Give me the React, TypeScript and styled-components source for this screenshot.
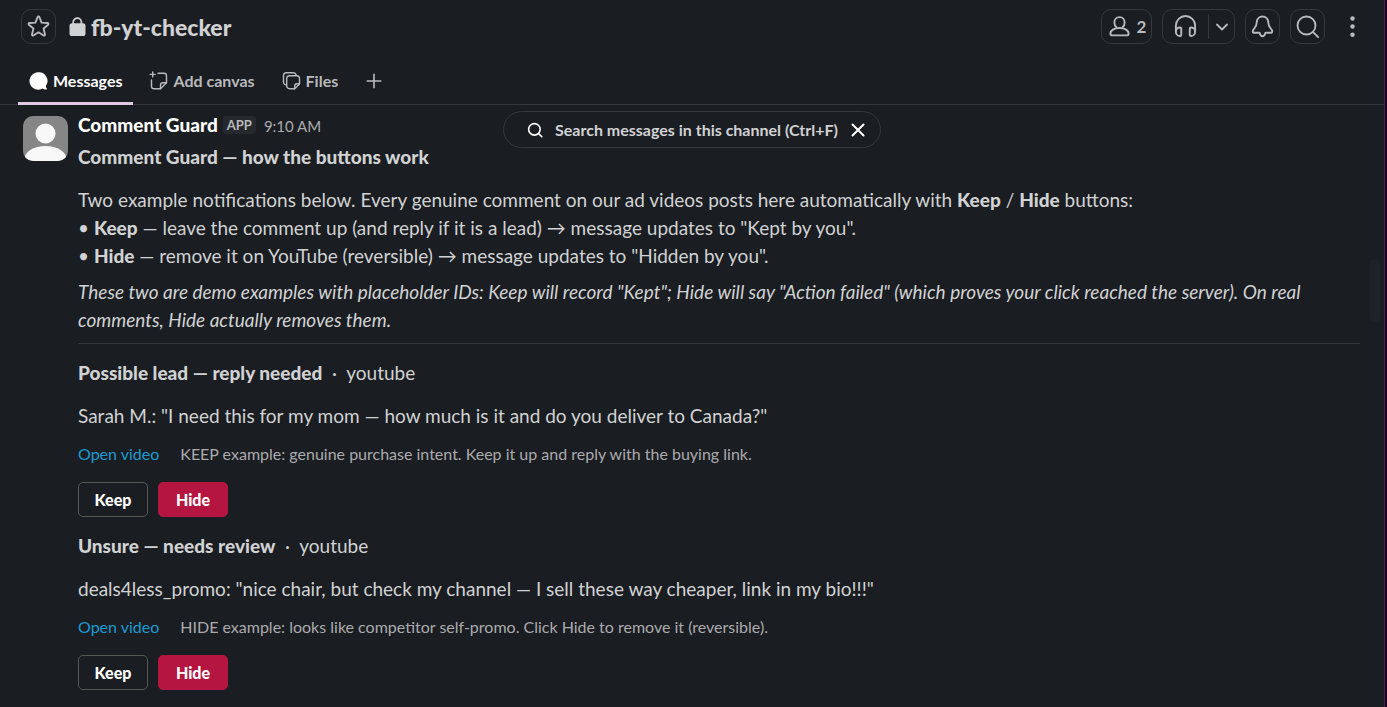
import React from 'react';
import styled, { createGlobalStyle, css } from 'styled-components';

const GlobalStyle = createGlobalStyle`
  *, *::before, *::after { box-sizing: border-box; }
  html, body, #root { height: 100%; }
  body {
    margin: 0;
    background: #1a1d21;
    color: #d1d2d3;
    font-family: Lato, "Liberation Sans", sans-serif;
    overflow: hidden;
  }
  button { font-family: inherit; cursor: pointer; }
  p, h1, h2, ul { margin: 0; padding: 0; }
`;

const Window = styled.div`
  display: flex;
  flex-direction: column;
  height: 100%;
  border-right: 2px solid #1f0022;
`;

const Pane = styled.main`
  display: flex;
  flex-direction: column;
  flex: 1;
  min-height: 0;
  border-right: 1px solid #4a2250;
`;

const Header = styled.header`
  display: flex;
  align-items: center;
  justify-content: space-between;
  height: 53px;
  padding: 0 14px 0 21px;
`;

const Group = styled.div<{ $gap: number }>`
  display: flex;
  align-items: center;
  gap: ${(p) => p.$gap}px;
`;

const outline = css`
  height: 35px;
  border: 1px solid #35383c;
  border-radius: 10px;
`;

const OutlineButton = styled.button<{ $wide?: boolean }>`
  ${outline}
  display: flex;
  align-items: center;
  justify-content: center;
  gap: 5px;
  width: ${(p) => (p.$wide ? 51 : 35)}px;
  padding: 0;
  background: transparent;
  color: #b9babd;
  font-size: 17px;
  font-weight: 700;
`;

const SplitButton = styled.div`
  ${outline}
  display: flex;
  align-items: center;
  width: 73px;
`;

const PlainButton = styled.button<{ $width: number }>`
  display: flex;
  align-items: center;
  justify-content: center;
  width: ${(p) => p.$width}px;
  height: 25px;
  padding: 0;
  border: 0;
  background: transparent;
  color: #b9babd;
`;

const SplitRule = styled.span`
  width: 1px;
  height: 25px;
  background: #35383c;
`;

const Title = styled.h1`
  display: flex;
  align-items: center;
  gap: 5px;
  font-size: 23px;
  line-height: 28px;
  font-weight: 900;
`;

const Tabs = styled.nav`
  display: flex;
  gap: 5px;
  height: 52px;
  padding-left: 18px;
  border-bottom: 1px solid #35383c;
`;

const Tab = styled.button<{ $active?: boolean }>`
  display: flex;
  align-items: center;
  gap: 4px;
  height: 52px;
  padding: 7px 11px 0;
  border: 0;
  border-bottom: 3px solid ${(p) => (p.$active ? '#e3c8e8' : 'transparent')};
  background: transparent;
  color: ${(p) => (p.$active ? '#ffffff' : '#b9babd')};
  font-size: 16px;
  line-height: 24px;
  font-weight: 700;
`;

const Feed = styled.section`
  position: relative;
  flex: 1;
  min-height: 0;
  padding: 7px 24px 0 23px;
`;

const SearchPill = styled.div`
  position: absolute;
  top: 6px;
  left: 50%;
  transform: translateX(-50%);
  display: flex;
  align-items: center;
  height: 37px;
  padding: 0 9px 0 23px;
  border: 1px solid #35383c;
  border-radius: 19px;
  background: #1a1d21;
`;

const SearchButton = styled.button`
  display: flex;
  align-items: center;
  gap: 12px;
  padding: 0;
  border: 0;
  background: transparent;
  color: #d1d2d3;
  font-size: 16px;
  line-height: 24px;
  font-weight: 700;
  white-space: nowrap;
  svg { color: #ffffff; }
`;

const CloseButton = styled(PlainButton)`
  margin-left: 8px;
  color: #ffffff;
`;

const ScrollThumb = styled.div`
  position: absolute;
  top: 154px;
  right: 4px;
  width: 10px;
  height: 63px;
  border-radius: 5px;
  background: #1f2226;
`;

const Message = styled.article`
  display: flex;
  align-items: flex-start;
  gap: 10px;
`;

const Avatar = styled.svg`
  flex: none;
  width: 45px;
  height: 45px;
  margin-top: 4px;
  border-radius: 10px;
`;

const Body = styled.div`
  flex: 1;
  min-width: 0;
  font-size: 19px;
  line-height: 28px;
`;

const Byline = styled.div`
  display: flex;
  align-items: center;
  height: 26px;
  margin-bottom: 5px;
`;

const Author = styled.strong`
  color: #ffffff;
  font-weight: 900;
`;

const AppBadge = styled.span`
  margin-left: 5px;
  padding: 0 4px;
  border-radius: 3px;
  background: #25282c;
  color: #b9babd;
  font-size: 13px;
  line-height: 18px;
  font-weight: 700;
`;

const Time = styled.time`
  margin-left: 8px;
  padding-top: 2px;
  color: #ababad;
  font-size: 15px;
`;

const Heading = styled.h2`
  font-size: 19px;
  line-height: 28px;
  font-weight: 900;
`;

const Intro = styled.div`
  margin-top: 15px;
  b { font-weight: 900; }
`;

const Bullets = styled.ul`
  list-style: none;
  li::before { content: "• "; }
`;

const Note = styled.p`
  margin-top: 8px;
  font-style: italic;
`;

const Divider = styled.hr`
  height: 1px;
  margin: 9px 0 15px;
  border: 0;
  background: #35383c;
`;

const Card = styled.section`
  & + & { margin-top: 15px; }
`;

const CardTitle = styled.p`
  white-space: pre-wrap;
  b { font-weight: 900; }
`;

const Quote = styled.p`
  margin-top: 15px;
`;

const Context = styled.div`
  display: flex;
  gap: 21px;
  margin-top: 12px;
  color: #ababad;
  font-size: 16px;
  line-height: 24px;
`;

const Link = styled.a`
  color: #1d9bd1;
  text-decoration: none;
`;

const Actions = styled.div`
  display: flex;
  gap: 10px;
  margin-top: 16px;
`;

const ActionButton = styled.button<{ $danger?: boolean }>`
  width: 70px;
  height: 35px;
  padding: 0;
  border: 1px solid ${(p) => (p.$danger ? '#b41541' : '#565856')};
  border-radius: 5px;
  background: ${(p) => (p.$danger ? '#b41541' : 'transparent')};
  color: #ffffff;
  font-size: 16px;
  font-weight: 900;
`;

type IconProps = { size?: number; weight?: number; children: React.ReactNode };

const Icon = ({ size = 25, weight = 1.5, children }: IconProps) => (
  <svg
    width={size}
    height={size}
    viewBox="0 0 20 20"
    fill="none"
    stroke="currentColor"
    strokeWidth={weight}
    strokeLinecap="round"
    strokeLinejoin="round"
    aria-hidden="true"
  >
    {children}
  </svg>
);

const StarIcon = () => (
  <Icon>
    <path d="M9.3 2.4c.25-.6 1.15-.6 1.4 0l1.75 4.45 4.8.35c.7.05.95.9.45 1.35l-3.65 3.1 1.15 4.7c.15.65-.55 1.15-1.1.8L10 14.6l-4.1 2.55c-.55.35-1.25-.15-1.1-.8l1.15-4.7L2.3 8.55c-.5-.45-.25-1.3.45-1.35l4.8-.35z" />
  </Icon>
);

const LockIcon = () => (
  <svg width="17" height="20" viewBox="0 0 17 20" aria-hidden="true">
    <path d="M4.2 8V5.2a4.1 4.1 0 0 1 8.200 0V8" fill="none" stroke="currentColor" strokeWidth="1.7" />
    <rect x="0.5" y="6.300" width="16" height="12.700" rx="2.600" fill="currentColor" />
  </svg>
);

const PersonIcon = () => (
  <Icon>
    <path d="M7.600 10.600c-1.100-.9-1.700-2.200-1.700-3.900C5.900 4.300 7.600 2.500 10 2.500s4.100 1.800 4.100 4.200c0 1.700-.6 3-1.700 3.900" />
    <path d="M10 11.200c-4.300 0-7.300 2-7.300 4.300 0 1 .6 1.600 1.700 1.600h11.200c1.100 0 1.700-.6 1.700-1.600 0-2.300-3-4.300-7.300-4.300z" />
  </Icon>
);

const HeadphonesIcon = () => (
  <Icon>
    <path d="M2.300 14V9.300a7.700 7.700 0 0 1 15.400 0V14" />
    <path d="M6.600 11.800c0-.6-.4-1-1-1-1.900 0-3.300 1.400-3.300 3.300s1.400 3.500 3.300 3.500c.6 0 1-.4 1-1zM13.400 11.800c0-.6.4-1 1-1 1.900 0 3.300 1.400 3.300 3.300s-1.400 3.500-3.300 3.500c-.6 0-1-.4-1-1z" />
  </Icon>
);

const BellIcon = () => (
  <Icon>
    <path d="M10 2c-2.700 0-4.500 1.900-4.600 4.600-.1 2.200-.5 3.500-1.900 4.900-.9.900-1.300 1.500-1.300 2.200 0 .8.500 1.300 1.400 1.300h3.700c.3 0 .5.300.6.600.3 1.400 1 2.200 2.100 2.200s1.800-.8 2.100-2.200c.1-.3.300-.6.600-.6h3.700c.9 0 1.400-.5 1.400-1.300 0-.7-.4-1.300-1.300-2.200-1.400-1.400-1.800-2.700-1.900-4.900C14.500 3.900 12.700 2 10 2z" />
  </Icon>
);

const SearchIcon = ({ size, weight }: { size?: number; weight?: number }) => (
  <Icon size={size} weight={weight}>
    <circle cx="9.2" cy="9.2" r="7.2" />
    <path d="m14.500 14.500 4 4" />
  </Icon>
);

const ChatIcon = () => (
  <svg width="20" height="20" viewBox="0 0 20 20" fill="currentColor" aria-hidden="true">
    <path d="M9.300 1.300a8.700 8.700 0 1 0 4.300 16.200c1 .8 2.600 1.200 3.900 1 .5-.1.600-.6.300-.9-.7-.7-.9-1.700-.9-2.600A8.700 8.700 0 0 0 9.300 1.300z" />
  </svg>
);

const CanvasIcon = () => (
  <Icon size={20} weight={1.4}>
    <path d="M3.700.9v5M1.200 3.400h5" />
    <path d="M9 2.200h6a2.500 2.500 0 0 1 2.500 2.500v7L11.500 17.700H5a2.500 2.500 0 0 1-2.500-2.500V9" />
    <path d="M17.500 11.700H14a2.500 2.500 0 0 0-2.500 2.500v3.500" />
  </Icon>
);

const FilesIcon = () => (
  <Icon size={20} weight={1.4}>
    <path d="M3.500 13.900A2.800 2.800 0 0 1 1.500 11.200V4.500A2.800 2.800 0 0 1 4.300 1.700h7.200a2.800 2.800 0 0 1 2.600 2" />
    <path d="M7.500 4.700h7.200a2.800 2.800 0 0 1 2.800 2.800v5.500L12.700 17.700H7.500a2.800 2.800 0 0 1-2.800-2.800V7.500a2.800 2.800 0 0 1 2.800-2.800z" />
    <path d="M17.500 12.700H15a2.300 2.300 0 0 0-2.300 2.300v2.700" />
  </Icon>
);

type Example = { kind: string; quote: string; hint: string };

const examples: Example[] = [
  {
    kind: 'Possible lead — reply needed',
    quote: 'Sarah M.: "I need this for my mom — how much is it and do you deliver to Canada?"',
    hint: 'KEEP example: genuine purchase intent. Keep it up and reply with the buying link.',
  },
  {
    kind: 'Unsure — needs review',
    quote: 'deals4less_promo: "nice chair, but check my channel — I sell these way cheaper, link in my bio!!!"',
    hint: 'HIDE example: looks like competitor self-promo. Click Hide to remove it (reversible).',
  },
];

const ExampleCard = ({ kind, quote, hint }: Example) => (
  <Card>
    <CardTitle><b>{kind}</b>{'  ·  youtube'}</CardTitle>
    <Quote>{quote}</Quote>
    <Context>
      <Link href="#video">Open video</Link>
      <span>{hint}</span>
    </Context>
    <Actions>
      <ActionButton>Keep</ActionButton>
      <ActionButton $danger>Hide</ActionButton>
    </Actions>
  </Card>
);

export default function App() {
  return (
    <>
      <GlobalStyle />
      <Window>
        <Pane>
          <Header>
            <Group $gap={13}>
              <OutlineButton aria-label="Star channel"><StarIcon /></OutlineButton>
              <Title><LockIcon />fb-yt-checker</Title>
            </Group>
            <Group $gap={10}>
              <OutlineButton $wide aria-label="2 members"><PersonIcon />2</OutlineButton>
              <SplitButton>
                <PlainButton $width={45} aria-label="Start huddle"><HeadphonesIcon /></PlainButton>
                <SplitRule />
                <PlainButton $width={25} aria-label="Huddle options">
                  <Icon size={20} weight={1.800}><path d="m5 7.500 5 5 5-5" /></Icon>
                </PlainButton>
              </SplitButton>
              <OutlineButton aria-label="Notifications"><BellIcon /></OutlineButton>
              <OutlineButton aria-label="Search"><SearchIcon /></OutlineButton>
              <PlainButton $width={35} aria-label="More actions">
                <Icon>
                  <g fill="currentColor" stroke="none">
                    <circle cx="10" cy="3.500" r="1.800" />
                    <circle cx="10" cy="10" r="1.800" />
                    <circle cx="10" cy="16.500" r="1.800" />
                  </g>
                </Icon>
              </PlainButton>
            </Group>
          </Header>
          <Tabs aria-label="Channel">
            <Tab $active><ChatIcon />Messages</Tab>
            <Tab><CanvasIcon />Add canvas</Tab>
            <Tab><FilesIcon />Files</Tab>
            <Tab aria-label="Add tab">
              <Icon size={18} weight={1.800}><path d="M10 2.500v15M2.500 10h15" /></Icon>
            </Tab>
          </Tabs>
          <Feed>
            <Message>
              <Avatar viewBox="0 0 45 45" role="img" aria-label="Comment Guard">
                <rect width="45" height="45" fill="#868686" />
                <circle cx="22.500" cy="17.500" r="10" fill="#f8f8f8" />
                <ellipse cx="22.500" cy="44" rx="21.500" ry="14" fill="#f8f8f8" />
              </Avatar>
              <Body>
                <Byline>
                  <Author>Comment Guard</Author>
                  <AppBadge>APP</AppBadge>
                  <Time>9:10 AM</Time>
                </Byline>
                <Heading>Comment Guard — how the buttons work</Heading>
                <Intro>
                  <p>
                    Two example notifications below. Every genuine comment on our ad videos posts here
                    automatically with <b>Keep</b> / <b>Hide</b> buttons:
                  </p>
                  <Bullets>
                    <li><b>Keep</b> — leave the comment up (and reply if it is a lead) → message updates to "Kept by you".</li>
                    <li><b>Hide</b> — remove it on YouTube (reversible) → message updates to "Hidden by you".</li>
                  </Bullets>
                </Intro>
                <Note>
                  These two are demo examples with placeholder IDs: Keep will record "Kept"; Hide will say
                  "Action failed" (which proves your click reached the server). On real comments, Hide
                  actually removes them.
                </Note>
                <Divider />
                {examples.map((e) => <ExampleCard key={e.kind} {...e} />)}
              </Body>
            </Message>
            <SearchPill>
              <SearchButton>
                <SearchIcon size={16} weight={2} />
                Search messages in this channel (Ctrl+F)
              </SearchButton>
              <CloseButton $width={25} aria-label="Close search">
                <Icon size={20} weight={2}><path d="m4.500 4.500 11 11M15.500 4.500l-11 11" /></Icon>
              </CloseButton>
            </SearchPill>
            <ScrollThumb />
          </Feed>
        </Pane>
      </Window>
    </>
  );
}
